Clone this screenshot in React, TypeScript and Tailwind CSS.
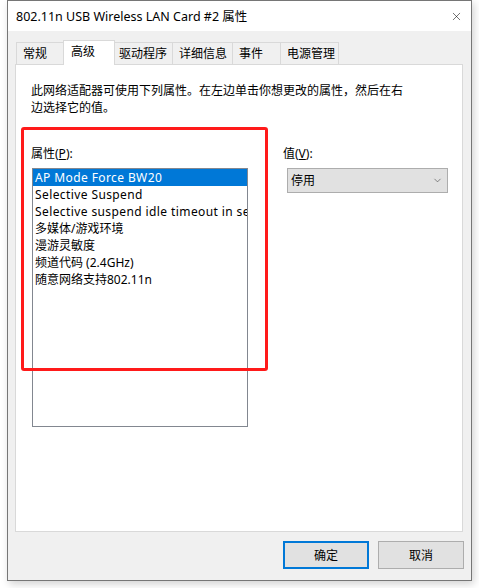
import { X, ChevronDown } from "lucide-react";

const font = { fontFamily: '"Noto Sans", "Noto Sans CJK SC", sans-serif' };

const tabs = [
  { label: "常规", w: "w-[48px]", pl: "pl-[6px]" },
  { label: "高级", w: "w-[52px]", pl: "pl-[7px]", active: true },
  { label: "驱动程序", w: "w-[59px]", pl: "pl-[4px]" },
  { label: "详细信息", w: "w-[61px]", pl: "pl-[6px]" },
  { label: "事件", w: "w-[49px]", pl: "pl-[6px]" },
  { label: "电源管理", w: "w-[59px]", pl: "pl-[6px]" },
];

const items = [
  { text: "AP Mode Force BW20", latin: true },
  { text: "Selective Suspend", latin: true },
  { text: "Selective suspend idle timeout in seconds", latin: true },
  { text: "多媒体/游戏环境" },
  { text: "漫游灵敏度" },
  { text: "频道代码 (2.4GHz)" },
  { text: "随意网络支持802.11n" },
];

export default function App() {
  return (
    <div className="w-[479px] h-[588px] bg-white text-black text-[12px] leading-[17px]" style={font}>
      <div className="relative ml-[7px] w-[465px] h-[581px] bg-[#f0f0f0] border border-[#767676] shadow-[2px_3px_8px_rgba(0,0,0,0.18)] flex flex-col">
        {/* title bar */}
        <div className="h-[30px] bg-white flex items-center justify-between pl-[8px] pr-[8px] shrink-0">
          <span className="text-[12.5px]">802.11n USB Wireless LAN Card #2 属性</span>
          <X size={13} strokeWidth={1} className="text-black" />
        </div>

        <div className="flex flex-col px-[7px] pt-[9px]">
          {/* tabs */}
          <div className="flex items-end h-[24px] ml-[1px]">
            {tabs.map((t, i) => (
              <div
                key={t.label}
                className={
                  t.active
                    ? `${t.w} ${t.pl} relative z-10 -mb-px h-[25px] bg-white border border-b-0 border-[#d9d9d9] pt-[2px] ${i > 0 ? "-ml-px" : ""}`
                    : `${t.w} ${t.pl} h-[22px] bg-[#f0f0f0] border border-b-0 border-[#d9d9d9] pt-[2px] ${i > 0 ? "-ml-px" : ""}`
                }
              >
                {t.label}
              </div>
            ))}
          </div>

          {/* panel */}
          <div className="relative w-[448px] h-[468px] bg-white border border-[#d9d9d9] pl-[15px] pt-[17px]">
            <p>
              此网络适配器可使用下列属性。在左边单击你想更改的属性，然后在右
              <br />
              边选择它的值。
            </p>

            <div className="flex mt-[29px]">
              <div className="flex flex-col w-[217px]">
                <span>
                  属性(<span className="underline">P</span>):
                </span>
                <div className="mt-[6px] ml-[1px] w-[216px] h-[259px] border border-[#828790] bg-white overflow-hidden">
                  {items.map((it, i) => (
                    <div
                      key={it.text}
                      className={`h-[17px] pl-[2px] whitespace-nowrap ${it.latin ? "tracking-[0.4px]" : ""} ${i === 0 ? "bg-[#0078d7] text-white" : ""}`}
                    >
                      {it.text}
                    </div>
                  ))}
                </div>
              </div>

              <div className="flex flex-col ml-[35px]">
                <span>
                  值(<span className="underline">V</span>):
                </span>
                <div className="mt-[6px] ml-[4px] w-[161px] h-[25px] bg-[#e1e1e1] border border-[#adadad] flex items-center justify-between pl-[3px] pr-[4px]">
                  <span>停用</span>
                  <ChevronDown size={11} strokeWidth={1.2} className="text-[#333]" />
                </div>
              </div>
            </div>

            {/* red annotation */}
            <div className="absolute left-[5px] top-[62px] w-[247px] h-[244px] border-[3px] border-[#ff1a1a] rounded-[3px]" />
          </div>

          {/* buttons */}
          <div className="flex justify-end gap-[9px] mt-[9px]">
            <button className="w-[86px] h-[28px] bg-[#e1e1e1] border-2 border-[#0078d7]">确定</button>
            <button className="w-[86px] h-[28px] bg-[#e1e1e1] border border-[#adadad]">取消</button>
          </div>
        </div>
      </div>
    </div>
  );
}
